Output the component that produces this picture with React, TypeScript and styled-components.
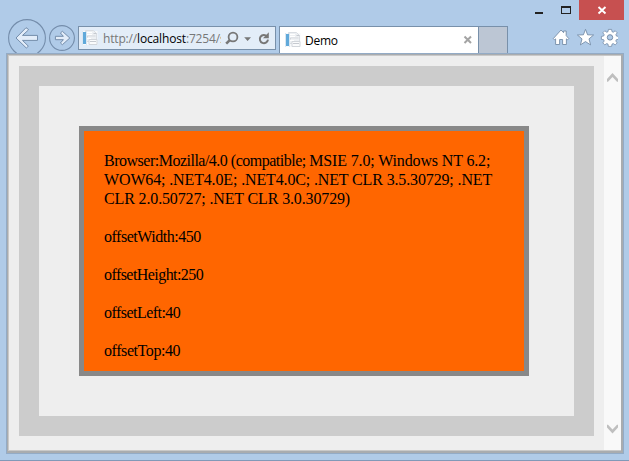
import React from "react";
import styled, { createGlobalStyle } from "styled-components";

const Global = createGlobalStyle`
  *, *::before, *::after { box-sizing: border-box; }
  body { margin: 0; overflow: hidden; }
  svg { display: block; flex: none; }
`;

const Window = styled.div`
  width: 629px;
  height: 461px;
  display: flex;
  flex-direction: column;
  background: #b0cbe8;
  border-bottom: 1px solid #8199b8;
  overflow: hidden;
`;

const TitleBar = styled.header`
  height: 20px;
  flex: none;
  display: flex;
  justify-content: flex-end;
  padding-right: 5px;
`;

const CaptionButton = styled.div<{ $width: number; $danger?: boolean }>`
  width: ${(p) => p.$width}px;
  height: 20px;
  background: ${(p) => (p.$danger ? "#c75050" : "transparent")};
`;

const Toolbar = styled.div`
  height: 34px;
  margin-top: -1px;
  flex: none;
  display: flex;
  align-items: flex-start;
  padding-left: 8px;
  overflow: hidden;
`;

const NavButton = styled.div<{ $gap: number; $top: number }>`
  margin: ${(p) => p.$top}px ${(p) => p.$gap}px 0 0;
`;

const AddressBar = styled.div`
  width: 198px;
  height: 24px;
  margin: 7px 3px 0 0;
  border: 1px solid #7890aa;
  background: #e3edf8;
  display: flex;
  align-items: center;
  padding-left: 3px;
`;

const Url = styled.div`
  width: 118px;
  margin: 1px 1px 0 5px;
  overflow: hidden;
  white-space: nowrap;
  font: 12px/22px "Open Sans", "Noto Sans", sans-serif;
  letter-spacing: -0.16px;
  color: #777;
  b { font-weight: 400; color: #000; }
`;

const Tab = styled.div`
  width: 200px;
  height: 27px;
  margin-top: 7px;
  border: 1px solid #7890aa;
  border-bottom: 0;
  border-right: 0;
  background: #fff;
  display: flex;
  align-items: center;
  padding: 0 6px 0 5px;
`;

const TabTitle = styled.div`
  flex: 1;
  margin: 2px 0 0 4px;
  font: 12px/24px "Open Sans", "Noto Sans", sans-serif;
  letter-spacing: -0.25px;
  color: #000;
`;

const NewTab = styled.div`
  width: 30px;
  height: 27px;
  margin: 7px 44px 0 -1px;
  border: 1px solid #7890aa;
  border-bottom: 0;
  background: #bcc6d4;
`;

const Tools = styled.div`
  display: flex;
  gap: 6px;
  margin-top: 9px;
`;

const Frame = styled.main`
  width: 618px;
  height: 401px;
  margin-left: 6px;
  border: 1px solid #93abc6;
  display: flex;
`;

const Viewport = styled.div`
  flex: 1;
  border: 1px solid #a9acaf;
  border-right-width: 2px;
  border-bottom-width: 2px;
  display: flex;
`;

const Page = styled.div`
  width: 596px;
  border: 1px solid #c9c9c9;
  border-right: 0;
  background: #eee;
  padding: 10px 0 0 10px;
`;

const OuterBox = styled.section`
  width: 575px;
  height: 370px;
  border: 20px solid #ccc;
  padding: 40px;
`;

const InfoBox = styled.article`
  width: 450px;
  height: 250px;
  border: 5px solid #888;
  background: #f60;
  padding: 20px;
  font: 16px/19px "Liberation Serif", serif;
  color: #000;
  white-space: nowrap;
`;

const InfoText = styled.p<{ $tracking: number }>`
  margin: 0 0 19px;
  letter-spacing: ${(p) => p.$tracking}px;
`;

const Tight = styled.span`
  letter-spacing: -0.5px;
`;

const ScrollTrack = styled.aside`
  flex: 1;
  display: flex;
  flex-direction: column;
  justify-content: space-between;
  align-items: flex-start;
  padding: 17px 0 16px 3px;
  background: #f9f9f9;
  border-top: 1px solid #c9c9c9;
  border-bottom: 1px solid #c9c9c9;
`;

const PageIcon = () => (
  <svg width="16" height="16" viewBox="0 0 16 16">
    <rect x=".5" y="1" width="15" height="14" fill="#f7f9fb" />
    <path d="M3.5.5h8l3 3v8h-11z" fill="#edf0f3" stroke="#d9dde2" />
    <path d="M5 2.5h5M5 4.5h5M5 8.5h4" stroke="#fff" />
    <path d="M5.5 7.5V6h8M7 9.5h8v5H7z" fill="#fafbfc" stroke="#d2d6db" />
    <path d="M8 11.5h6M11.5 3.5h3" stroke="#c6cad0" />
    <rect x="1" y="2" width="3" height="12" fill="#60a9da" />
    <path d="M.5 1v14M4.5 1v14" stroke="#d9e7f2" />
  </svg>
);

const AddressIcons = () => (
  <svg width="50" height="20" viewBox="0 0 50 20" fill="none" stroke="#777">
    <circle cx="11" cy="9" r="4.4" strokeWidth="1.8" />
    <path d="M7.8 12.1 4.2 15.7" strokeWidth="2.6" />
    <path d="M22.2 9.2h6.8l-3.4 3.7z" fill="#777" stroke="none" />
    <path d="M45 8.3A4.1 4.1 0 1 0 46 11.7" strokeWidth="2" />
    <path d="M46.8 4.2v6H41z" fill="#777" stroke="none" />
  </svg>
);

const arrowBack =
  "M16 38 26 27.7 28.4 29.3V30L22.5 35.4H37.5v5H22.5L28.4 46.2 26.3 48z";
const arrowForward =
  "M69.8 38 62.4 31.3 60.4 33 63.4 36.3H55.4v3.4H63.4L60.4 43 62.4 44.7z";

export default function App() {
  return (
    <>
      <Global />
      <Window>
        <TitleBar>
          <CaptionButton $width={26}>
            <svg width="26" height="20"><rect x="9" y="12" width="8" height="2" fill="#222" /></svg>
          </CaptionButton>
          <CaptionButton $width={27}>
            <svg width="27" height="20"><path d="M9 6h10v8H9zM10 8v5h8V8z" fill="#222" fillRule="evenodd" /></svg>
          </CaptionButton>
          <CaptionButton $width={45} $danger>
            <svg width="45" height="20"><path d="m19.5 7 7 6.5m0-6.5-7 6.5" stroke="#fff" strokeWidth="1.9" /></svg>
          </CaptionButton>
        </TitleBar>
        <Toolbar>
          <NavButton $gap={3} $top={0}>
            <svg width="38" height="38" viewBox="8 19 38 38" stroke="#748dab">
              <circle cx="27" cy="38" r="18.4" fill="none" strokeWidth="1.1" />
              <path d={arrowBack} fill="#e3edf9" />
            </svg>
          </NavButton>
          <NavButton $gap={3} $top={6}>
            <svg width="26" height="26" viewBox="49 25 26 26" stroke="#748dab">
              <circle cx="62" cy="38" r="12.4" fill="none" strokeWidth="1.1" />
              <path d={arrowForward} fill="#e3edf9" />
            </svg>
          </NavButton>
          <AddressBar>
            <PageIcon />
            <Url>http://<b>localhost</b>:7254/s</Url>
            <AddressIcons />
          </AddressBar>
          <Tab>
            <PageIcon />
            <TabTitle>Demo</TabTitle>
            <svg width="10" height="10"><path d="m1.5 1.5 6.5 6.5m0-6.5-6.5 6.5" stroke="#a4a4a4" strokeWidth="2" /></svg>
          </Tab>
          <NewTab />
          <Tools>
            <svg width="18" height="19" viewBox="552 28 18 19">
              <path d="M553.3 38.6 561 30l2.6 2.7V31h2.6v4.6l2.6 3-1.2 1.2-1.2-.9V44.5h-3.8v-5h-3v5h-4v-5.6l-1.1.9z" fill="#fff" stroke="#758ca7" strokeWidth=".9" />
            </svg>
            <svg width="18" height="19" viewBox="576 28 18 19">
              <path d="m585.5 29.3 2.1 5.5 6 .2-4.6 3.9 1.6 6-5.1-3.3-5.1 3.3 1.6-6-4.6-3.9 6-.2z" fill="#fff" stroke="#758ca7" strokeWidth=".9" />
            </svg>
            <svg width="18" height="19" viewBox="601 28 18 19">
              <g transform="translate(1 -.2)">
                <path d="M608.4 29.6h3.2l.4 2.3 1.3.5 1.9-1.4 2 2-1.3 1.9.6 1.4 2.1.3v2.9l-2.3.4-.5 1.3 1.4 1.9-2 2-1.9-1.3-1.3.5-.4 2.3h-3.2l-.4-2.3-1.3-.5-1.9 1.3-2-2 1.4-1.9-.5-1.3-2.3-.4v-2.9l2.3-.4.5-1.3-1.4-1.9 2-2 1.9 1.4 1.3-.5z" fill="#fff" stroke="#758ca7" strokeWidth=".8" />
                <circle cx="610" cy="37.6" r="2.7" fill="#b0cbe8" stroke="#758ca7" />
              </g>
            </svg>
          </Tools>
        </Toolbar>
        <Frame>
          <Viewport>
            <Page>
              <OuterBox>
                <InfoBox>
                  <InfoText $tracking={-0.14}>
                    <Tight>Browser:Mozilla/4.0 (compatible; </Tight>MSIE 7.0; Windows NT 6.2;<br />
                    WOW64; .NET4.0E; .NET4.0C; .NET CLR 3.5.30729; .NET<br />
                    CLR 2.0.50727; .NET CLR 3.0.30729)
                  </InfoText>
                  <InfoText $tracking={-0.47}>offsetWidth:450</InfoText>
                  <InfoText $tracking={-0.56}>offsetHeight:250</InfoText>
                  <InfoText $tracking={-0.54}>offsetLeft:40</InfoText>
                  <InfoText $tracking={-0.42}>offsetTop:40</InfoText>
                </InfoBox>
              </OuterBox>
            </Page>
            <ScrollTrack>
              <svg width="11" height="10"><path d="M0 6 5.5 0 11 6v2.7H10L5.5 4 1 8.7H0z" fill="#bfbfbf" /></svg>
              <svg width="11" height="10"><path d="M0 3.4V.7h1L5.5 5.4 10 .7h1v2.7L5.5 9.4z" fill="#bfbfbf" /></svg>
            </ScrollTrack>
          </Viewport>
        </Frame>
      </Window>
    </>
  );
}
